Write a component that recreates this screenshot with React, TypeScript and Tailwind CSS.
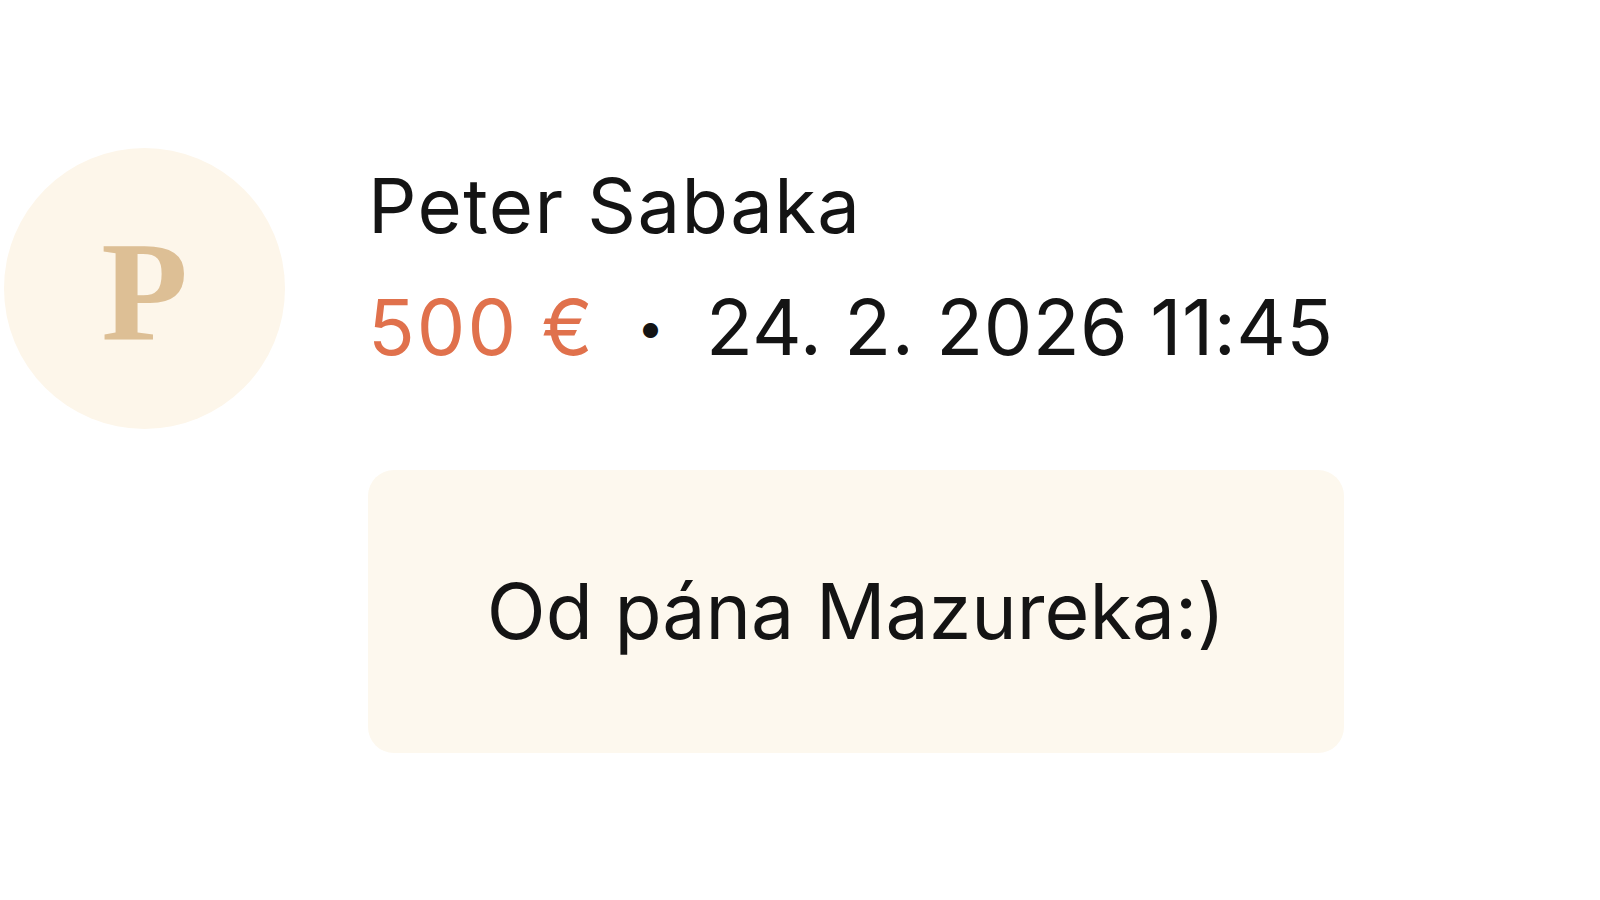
export default function App() {
  return (
    <div className="w-full h-[900px] bg-white overflow-hidden font-['Inter',sans-serif] text-[#141414]">
      <div className="flex items-start pt-[148px] pl-[4px]">
        <div className="w-[281px] h-[281px] shrink-0 rounded-full bg-[#fdf6ea] flex items-center justify-center">
          <span className="font-['Liberation_Serif',serif] font-bold text-[142px] leading-none text-[#ddbf95] mt-[6px]">P</span>
        </div>
        <div className="ml-[83px] mt-[20px] flex flex-col">
          <div className="text-[76px] leading-[74px] tracking-[1.4px]">Peter Sabaka</div>
          <div className="mt-[48px] flex items-center text-[77px] leading-[74px]">
            <span className="text-[#e0714c] tracking-[2px]">500 €</span>
            <span className="ml-[42px] text-[48px]">•</span>
            <span className="ml-[42px] tracking-[0.4px]">24. 2. 2026 11:45</span>
          </div>
          <div className="mt-[106px] w-[976px] h-[283px] rounded-[26px] bg-[#fdf8ee] flex items-center justify-center">
            <span className="text-[77px] leading-none">Od pána Mazureka:)</span>
          </div>
        </div>
      </div>
    </div>
  );
}
